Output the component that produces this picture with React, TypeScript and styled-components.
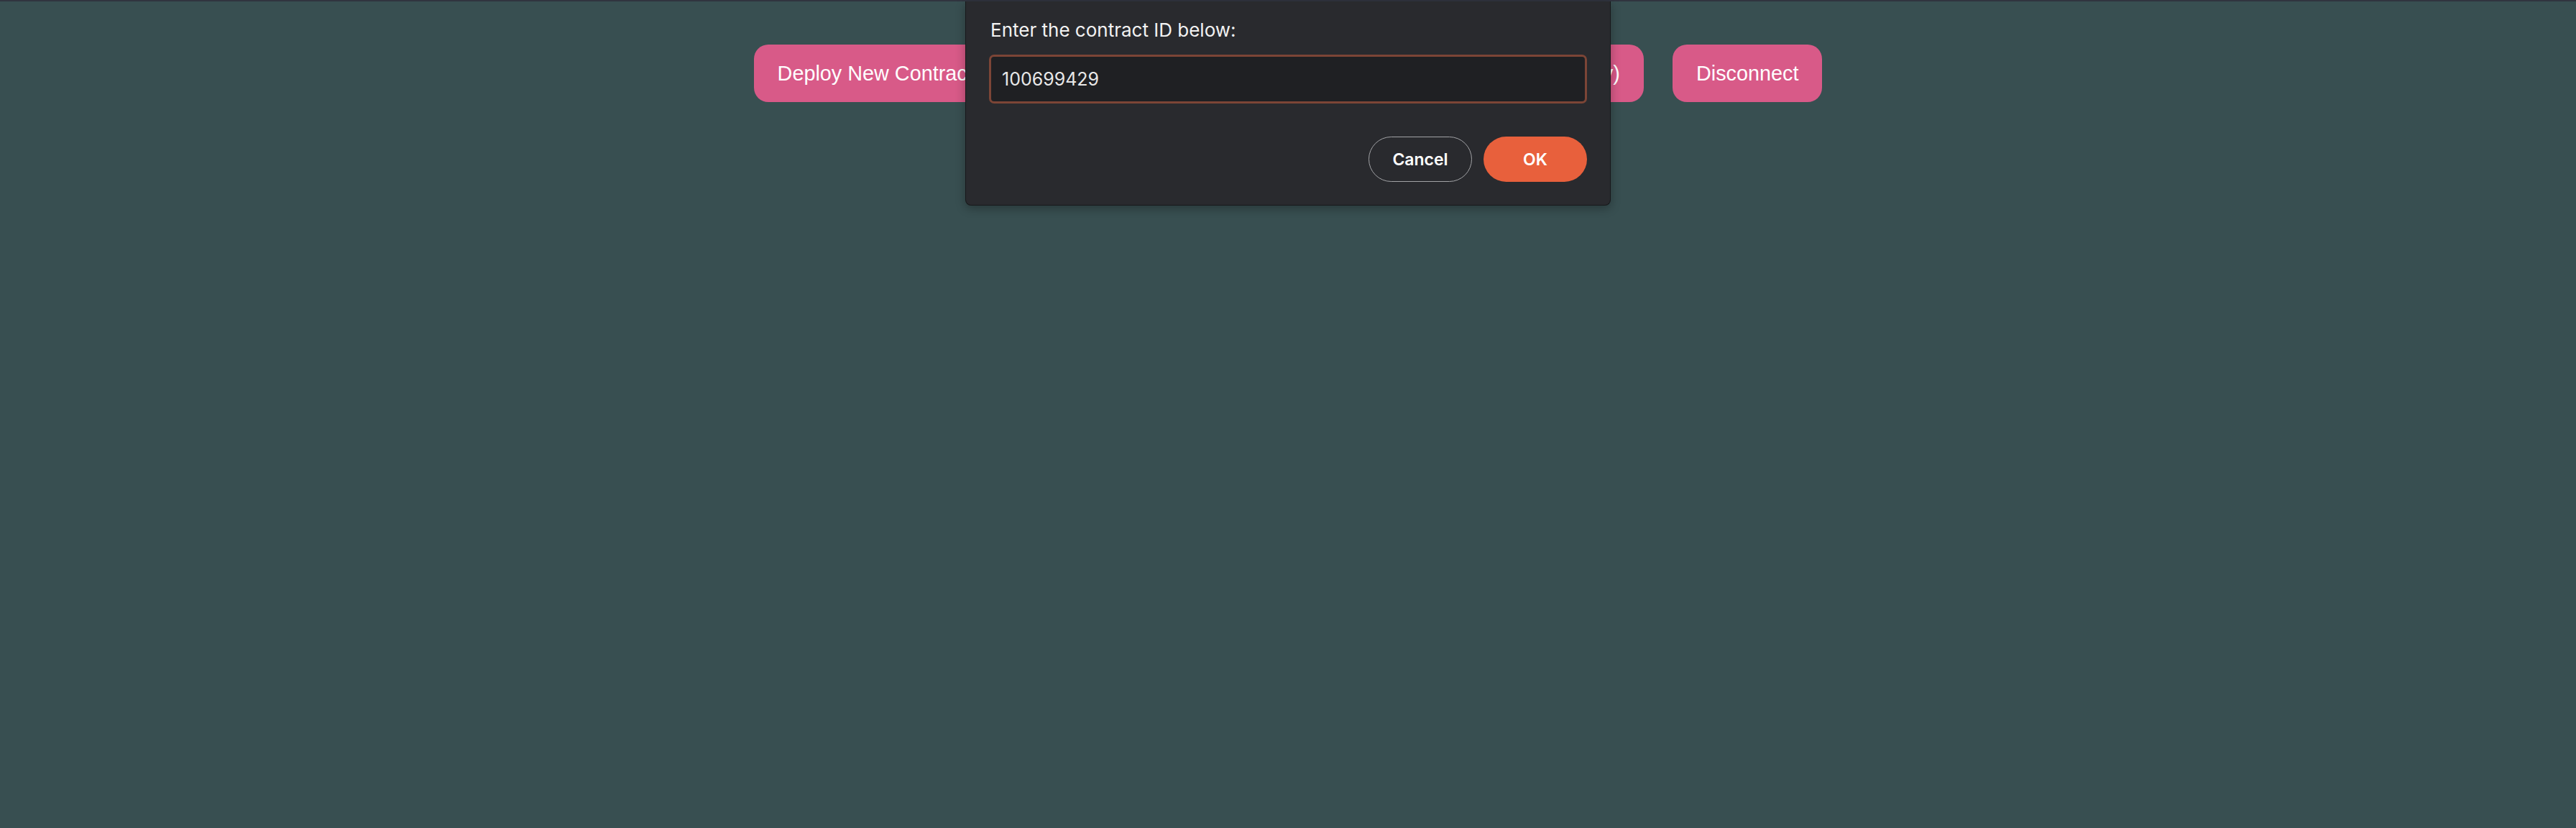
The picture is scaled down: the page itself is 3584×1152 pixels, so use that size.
import React from "react";
import styled, { createGlobalStyle } from "styled-components";

const Global = createGlobalStyle`
  html, body { margin: 0; padding: 0; background: #384f51; }
  body { font-family: "Liberation Sans", Arial, sans-serif; }
`;

const Page = styled.div`
  position: relative;
  min-height: 1152px;
  background: #384f51;
  border-top: 2px solid #30343f;
  box-sizing: border-box;
`;

const Toolbar = styled.div`
  display: flex;
  justify-content: center;
  gap: 40px;
  padding-top: 60px;
`;

const PinkButton = styled.button`
  height: 80px;
  padding: 0 33px;
  border: none;
  border-radius: 20px;
  background: #d85a88;
  color: #ffffff;
  font-family: "Liberation Sans", Arial, sans-serif;
  font-size: 28.8px;
  white-space: nowrap;
  cursor: pointer;
`;

const Dialog = styled.div`
  position: absolute;
  top: 0;
  left: 50%;
  transform: translateX(-50%);
  width: 898px;
  box-sizing: border-box;
  padding: 22px 32px 32px;
  background: #292a2e;
  border: 1px solid #17181a;
  border-top: none;
  border-radius: 0 0 8px 8px;
  box-shadow: 0 4px 14px rgba(0, 0, 0, 0.3);
  font-family: Inter, "Noto Sans", sans-serif;
  color: #f2f2f2;
`;

const Label = styled.div`
  font-size: 26px;
  line-height: 36px;
  margin-left: 2px;
`;

const Input = styled.input`
  display: block;
  width: 100%;
  height: 68px;
  box-sizing: border-box;
  margin-top: 16px;
  padding: 0 15px;
  background: #1f2023;
  border: 3px solid #7c4536;
  border-radius: 7px;
  color: #e8e8e8;
  font-family: Inter, "Noto Sans", sans-serif;
  font-size: 25px;
  outline: none;
`;

const Actions = styled.div`
  display: flex;
  justify-content: flex-end;
  gap: 16px;
  margin-top: 46px;
`;

const DialogButton = styled.button<{ $primary?: boolean }>`
  width: 144px;
  height: 63px;
  border-radius: 32px;
  box-sizing: border-box;
  border: ${(p) => (p.$primary ? "none" : "1.5px solid #a2a3a6")};
  background: ${(p) => (p.$primary ? "#e8603c" : "transparent")};
  color: #ffffff;
  font-family: Inter, "Noto Sans", sans-serif;
  font-weight: 600;
  font-size: 23px;
  cursor: pointer;
`;

export default function App() {
  return (
    <>
      <Global />
      <Page>
        <Toolbar>
          <PinkButton>Deploy New Contract</PinkButton>
          <PinkButton>Load Existing Contract (by ID)</PinkButton>
          <PinkButton>Get Counter (read-only)</PinkButton>
          <PinkButton>Disconnect</PinkButton>
        </Toolbar>
        <Dialog>
          <Label>Enter the contract ID below:</Label>
          <Input defaultValue="100699429" />
          <Actions>
            <DialogButton>Cancel</DialogButton>
            <DialogButton $primary>OK</DialogButton>
          </Actions>
        </Dialog>
      </Page>
    </>
  );
}
